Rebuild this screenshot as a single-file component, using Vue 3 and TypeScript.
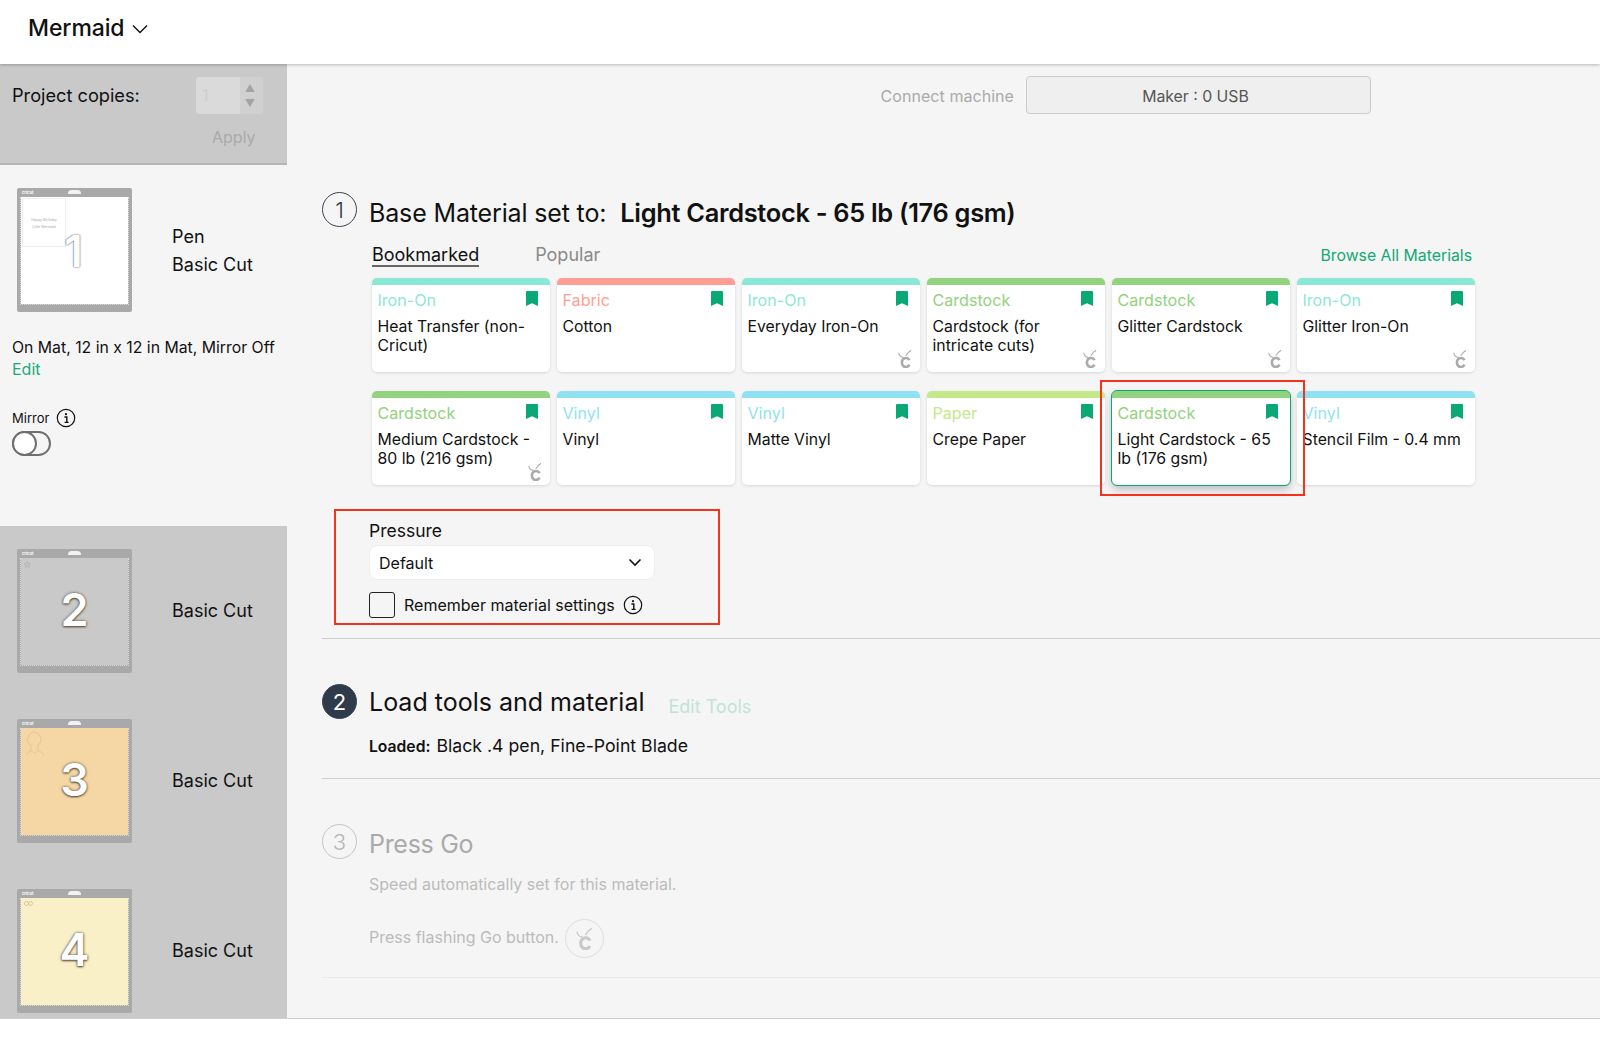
<script setup lang="ts">
interface Material { cat: string; name: string; color: string; go: boolean; selected?: boolean }
const IRON = '#8ce8d6', FABRIC = '#ff9e94', CARD = '#93d27e', VINYL = '#8fe2f4', PAPER = '#c4e88a'
const materials: Material[] = [
  { cat: 'Iron-On', name: 'Heat Transfer (non-Cricut)', color: IRON, go: false },
  { cat: 'Fabric', name: 'Cotton', color: FABRIC, go: false },
  { cat: 'Iron-On', name: 'Everyday Iron-On', color: IRON, go: true },
  { cat: 'Cardstock', name: 'Cardstock (for intricate cuts)', color: CARD, go: true },
  { cat: 'Cardstock', name: 'Glitter Cardstock', color: CARD, go: true },
  { cat: 'Iron-On', name: 'Glitter Iron-On', color: IRON, go: true },
  { cat: 'Cardstock', name: 'Medium Cardstock - 80 lb (216 gsm)', color: CARD, go: true },
  { cat: 'Vinyl', name: 'Vinyl', color: VINYL, go: false },
  { cat: 'Vinyl', name: 'Matte Vinyl', color: VINYL, go: false },
  { cat: 'Paper', name: 'Crepe Paper', color: PAPER, go: false },
  { cat: 'Cardstock', name: 'Light Cardstock - 65 lb (176 gsm)', color: CARD, go: false, selected: true },
  { cat: 'Vinyl', name: 'Stencil Film - 0.4 mm', color: VINYL, go: false },
]
const otherMats = [
  { n: 2, tone: 'gray', mark: 'star' },
  { n: 3, tone: 'orange', mark: 'mermaid' },
  { n: 4, tone: 'cream', mark: 'glasses' },
]
</script>

<template>
  <div class="page">
    <header class="top">
      <span class="project">Mermaid</span>
      <svg class="top-chev" width="16" height="10" viewBox="0 0 16 10" fill="none" stroke="#111" stroke-width="1.4"><path d="M1 1.5 8 8.5 15 1.5" /></svg>
    </header>
    <div class="body">
      <aside class="side">
        <section class="copies">
          <div class="copies-row">
            <span class="copies-label">Project copies:</span>
            <div class="stepper">
              <span class="stepper-val">1</span>
              <span class="stepper-arrows">
                <svg width="10" height="8" viewBox="0 0 12 10"><path d="M6 0 12 10H0Z" fill="#a3a3a3" /></svg>
                <svg width="10" height="8" viewBox="0 0 12 10"><path d="M6 10 12 0H0Z" fill="#a3a3a3" /></svg>
              </span>
            </div>
          </div>
          <div class="apply">Apply</div>
        </section>
        <section class="mat-active">
          <div class="mat-row">
            <div class="mat">
              <span class="mat-brand">cricut</span><span class="mat-notch"></span>
              <div class="mat-sheet white">
                <div class="mat-piece"><span>Happy Birthday</span><span>Little Mermaid</span></div>
                <span class="mat-num first">1</span>
              </div>
            </div>
            <div class="mat-text"><div>Pen</div><div>Basic Cut</div></div>
          </div>
          <p class="mat-info">On Mat, 12 in x 12 in Mat, Mirror Off</p>
          <a class="mat-edit">Edit</a>
          <div class="mirror">
            <span>Mirror</span>
            <svg width="20" height="20" viewBox="0 0 20 20"><circle cx="10" cy="10" r="8.7" fill="none" stroke="#111" stroke-width="1.2" /><circle cx="10" cy="6.2" r="1.1" fill="#111" /><path d="M8.4 9h2.4v5M8.6 14.4h4" fill="none" stroke="#111" stroke-width="1.4" /></svg>
          </div>
          <div class="toggle"><span class="knob"></span></div>
        </section>
        <section class="mat-rest">
          <div v-for="m in otherMats" :key="m.n" class="mat-row">
            <div class="mat">
              <span class="mat-brand">cricut</span><span class="mat-notch"></span>
              <div class="mat-sheet" :class="m.tone">
                <svg v-if="m.mark === 'star'" class="mark" width="7" height="7" viewBox="0 0 10 10"><path d="M5 .8 6.2 3.7 9.4 4 7 6 7.8 9.2 5 7.5 2.2 9.2 3 6 .6 4 3.8 3.7Z" fill="none" stroke="#a8a8a8" stroke-width=".8" /></svg>
                <svg v-if="m.mark === 'mermaid'" class="mark mark-mermaid" width="22" height="28" viewBox="0 0 22 28" fill="none" stroke="#e0bc8a" stroke-width=".7"><path d="M7 16C2 14 3 9 5 8 4 3 13 1 15 6 18 8 18 13 14 16L14 21M7 16V21L2 26M14 21 21 26M7 21C9 25 12 25 14 21" /></svg>
                <svg v-if="m.mark === 'glasses'" class="mark" width="9" height="5" viewBox="0 0 18 10" fill="none" stroke="#bdb28a" stroke-width="1.2"><circle cx="5" cy="5" r="4" /><circle cx="13" cy="5" r="4" /></svg>
                <span class="mat-num">{{ m.n }}</span>
              </div>
            </div>
            <div class="mat-text"><div>Basic Cut</div></div>
          </div>
        </section>
      </aside>
      <main class="main">
        <div class="connect">
          <span class="connect-label">Connect machine</span>
          <button class="connect-btn" type="button">Maker : 0 USB</button>
        </div>

        <section class="step one">
          <div class="step-head">
            <span class="step-num">1</span>
            <h2 class="step-title tight">Base Material set to:</h2>
            <strong class="step-strong">Light Cardstock - 65 lb (176 gsm)</strong>
          </div>
          <div class="tabs">
            <span class="tab active">Bookmarked</span>
            <span class="tab">Popular</span>
            <a class="browse">Browse All Materials</a>
          </div>
          <div class="grid">
            <div v-for="m in materials" :key="m.name" class="card" :class="{ selected: m.selected }" :style="{ borderTopColor: m.color }">
              <div class="card-cat" :style="{ color: m.color }">{{ m.cat }}</div>
              <div class="card-name">{{ m.name }}</div>
              <svg class="card-mark" width="12" height="15" viewBox="0 0 12 15"><path d="M0 1.2C0 .5.5 0 1.2 0h9.6c.7 0 1.2.5 1.2 1.2V15L6 12.2 0 15Z" fill="#0aa874" /></svg>
              <svg v-if="m.go" class="card-go" width="14" height="18" viewBox="0 0 17 22" fill="none" stroke="#ababab"><path d="M14 12.500A5 5.500 0 1 0 14 18" stroke-width="3.200" /><path d="M1 3.500C1 6 3 9 6.500 9M16 .5C13 1.500 11.500 4 9.500 7" stroke-width="1.300" /></svg>
              <span v-if="m.selected" class="note-sel"></span>
            </div>
          </div>
          <div class="pressure">
            <label class="pressure-label">Pressure</label>
            <div class="select">
              <span>Default</span>
              <svg width="14" height="9" viewBox="0 0 14 9" fill="none" stroke="#111" stroke-width="1.6"><path d="M1.500 1.500 7 7l5.500-5.500" /></svg>
            </div>
            <div class="remember">
              <span class="check"></span>
              <span>Remember material settings</span>
              <svg width="20" height="20" viewBox="0 0 20 20"><circle cx="10" cy="10" r="8.7" fill="none" stroke="#111" stroke-width="1.2" /><circle cx="10" cy="6.2" r="1.1" fill="#111" /><path d="M8.400 9h2.400v5M8.600 14.400h4" fill="none" stroke="#111" stroke-width="1.400" /></svg>
            </div>
            <span class="note-box"></span>
          </div>
        </section>

        <section class="step two">
          <div class="step-head">
            <span class="step-num filled">2</span>
            <h2 class="step-title load">Load tools and material</h2>
            <a class="edit-tools">Edit Tools</a>
          </div>
          <p class="loaded"><b>Loaded:</b> Black .4 pen, Fine-Point Blade</p>
        </section>

        <section class="step three">
          <div class="step-head">
            <span class="step-num muted">3</span>
            <h2 class="step-title muted-title">Press Go</h2>
          </div>
          <p class="speed">Speed automatically set for this material.</p>
          <div class="flash">
            <span>Press flashing Go button.</span>
            <span class="go-btn">
              <svg width="17" height="22" viewBox="0 0 17 22" fill="none" stroke="#c9c9c9"><path d="M14 12.500A5 5.500 0 1 0 14 18" stroke-width="3.200" /><path d="M1 3.500C1 6 3 9 6.500 9M16 .5C13 1.500 11.500 4 9.500 7" stroke-width="1.300" /></svg>
            </span>
          </div>
        </section>
      </main>
    </div>
    <footer class="foot"></footer>
  </div>
</template>

<style>
html, body { margin: 0; background: #fff; }
</style>

<style scoped>
* { box-sizing: border-box; }
.page { width: 1600px; height: 1038px; display: flex; flex-direction: column; overflow: hidden; background: #fff; color: #111; font-family: Inter, "Noto Sans", sans-serif; }
.top { height: 64px; flex: none; display: flex; align-items: center; gap: 7px; padding-left: 28px; background: #fff; box-shadow: 0 1px 3px rgba(0,0,0,.25); position: relative; z-index: 2; }
.project { font-size: 23px; font-weight: 500; letter-spacing: -.1px; margin-top: -9px; }
.top-chev { margin-top: -6px; }
.body { flex: 1; display: flex; min-height: 0; }
.side { width: 287px; flex: none; display: flex; flex-direction: column; overflow: hidden; background: #f5f5f5; }
.copies { height: 101px; flex: none; background: #c9c9c9; border-bottom: 2px solid #b6b6b6; padding: 13px 24px 0 12px; }
.copies-row { display: flex; justify-content: space-between; align-items: center; }
.copies-label { font-size: 18.200px; margin-top: -1px; }
.stepper { width: 67px; height: 37px; display: flex; border-radius: 4px; overflow: hidden; background: #d9d9d9; }
.stepper-val { flex: 1; padding: 8px 0 0 6px; font-size: 16px; color: #cfcfcf; background: #dadada; }
.stepper-arrows { width: 23px; display: flex; flex-direction: column; align-items: center; justify-content: center; gap: 7px; padding-right: 3px; background: #d0d0d0; }
.apply { margin-top: 13px; padding-left: 200px; font-size: 16px; color: #a9a9a9; }
.mat-active { height: 361px; flex: none; padding-bottom: 0; }
.mat-row { height: 170px; flex: none; padding: 23px 0 0 17px; display: flex; align-items: flex-start; }
.mat-active .mat-row { height: 173px; }
.mat { width: 115px; height: 124px; flex: none; position: relative; background: #a9a9a9; border-radius: 2px; padding: 9px 3px 7px 3px; }
.mat-brand { position: absolute; left: 5px; top: 2px; font-size: 4px; line-height: 5px; color: #fff; font-weight: 700; }
.mat-notch { position: absolute; left: 51px; top: 2px; width: 13px; height: 4px; background: #f2f2f2; border-radius: 7px 7px 1px 1px; }
.mat-sheet { height: 108px; display: flex; align-items: center; justify-content: center; position: relative; background-clip: padding-box; border-left: 1px dotted rgba(255,255,255,.6); border-bottom: 1px dotted rgba(255,255,255,.6); border-right: 1px dotted rgba(255,255,255,.6); }
.white { background-color: #fff; }
.gray { background-color: #c9c9c9; }
.orange { background-color: #f5d7a6; }
.cream { background-color: #f9f0c8; }
.mat-piece { position: absolute; left: 1px; top: 1px; width: 44px; height: 49px; border: 1px solid #eee; display: flex; flex-direction: column; align-items: center; padding-top: 19px; gap: 2px; font-size: 3.500px; line-height: 5px; color: #aaa; background: #fff; white-space: nowrap; }
.mark { position: absolute; left: 3px; top: 3px; }
.mark-mermaid { left: 3px; top: 1px; }
.mat-num { font-size: 45px; line-height: 1; font-weight: 600; color: #fff; text-shadow: 0 0 3px #5a4c38, 0 1px 2px #5a4c38; position: relative; top: -2px; }
.mat-num.first { font-size: 44px; top: 0; left: -1px; text-shadow: 0 0 2px #666, 0 0 1px #666; }
.mat-text { margin-left: 40px; font-size: 18px; line-height: 27.500px; align-self: center; color: #111; margin-top: -25px; position: relative; top: 0; }
.mat-info { margin: 0 0 0 12px; font-size: 15.800px; line-height: 20px; }
.mat-edit { display: block; margin: 2px 0 0 12px; font-size: 16px; line-height: 19px; color: #1aab7b; }
.mirror { margin: 29px 0 0 12px; display: flex; align-items: center; gap: 7px; font-size: 13px; height: 20px; }
.toggle { margin: 3px 0 0 12px; width: 39px; height: 25px; border: 2px solid #6f6f6f; border-radius: 13px; background: #f5f5f5; position: relative; }
.knob { position: absolute; left: -2px; top: -2px; width: 25px; height: 25px; border-radius: 50%; border: 2px solid #6f6f6f; background: #fff; }
.mat-rest { flex: 1; background: #c9c9c9; min-height: 0; overflow: hidden; }
.mat-rest .mat-text { margin-top: 0; top: -12px; }
.main { flex: 1; min-width: 0; background: #f5f5f5; padding-left: 35px; display: flex; flex-direction: column; }
.connect { height: 128px; flex: none; display: flex; align-items: flex-start; padding: 12px 229px 0 0; justify-content: flex-end; gap: 12px; }
.connect-label { font-size: 16px; color: #aaa; line-height: 40px; letter-spacing: .05px; }
.connect-btn { width: 345px; height: 38px; border: 1px solid #ccc; border-radius: 4px; background: #efefef; font: inherit; font-size: 15.800px; color: #555; padding: 2px 6px 0 0; }
.step { border-bottom: 1px solid #cfcfcf; position: relative; }
.step-head { display: flex; align-items: center; height: 35px; }
.step-num { width: 35px; height: 35px; flex: none; border-radius: 50%; border: 1px solid #3a4250; display: flex; align-items: center; justify-content: center; font-size: 22px; font-weight: 300; color: #2f3a4a; margin-right: 12px; }
.step-num.filled { background: #2f3a4a; color: #fff; font-weight: 400; }
.step-num.muted { border-color: #c4c4c4; color: #b4b4b4; }
.step-title { margin: 0; font-size: 25px; font-weight: 400; line-height: 35px; white-space: nowrap; position: relative; top: 3px; }
.step-title.tight { letter-spacing: -.15px; top: 4px; }
.step-title.load { top: 1px; }
.muted-title { color: #aaa; letter-spacing: -.3px; }
.step-strong { font-size: 25.400px; font-weight: 600; margin-left: 14px; white-space: nowrap; position: relative; top: 3px; letter-spacing: -.3px; }
.one { height: 447px; }
.tabs { display: flex; align-items: baseline; margin: 15px 128px 0 50px; font-size: 18px; height: 36px; padding-top: 2px; }
.tab { color: #8a8a8a; margin-right: 56px; }
.tab.active { color: #111; border-bottom: 2px solid #666; }
.browse { margin-left: auto; font-size: 15.800px; color: #12a877; }
.grid { display: grid; grid-template-columns: repeat(6, 178px); grid-auto-rows: 94px; gap: 19px 7px; margin-left: 50px; }
.card { background: #fff; border-radius: 5px; border-top: 7px solid; padding: 5px 6px 0 5.500px; position: relative; box-shadow: 0 1px 3px rgba(0,0,0,.12); }
.card-cat { font-size: 16.100px; line-height: 20px; }
.card-name { margin-top: 6.500px; font-size: 15.800px; line-height: 19px; color: #111; }
.card-mark { position: absolute; right: 12.500px; top: 6px; }
.card-go { position: absolute; right: 8px; bottom: 4px; }
.card.selected { outline: 1px solid #0aa874; box-shadow: 0 4px 8px rgba(0,0,0,.25); }
.note-sel { position: absolute; left: -12px; top: -18px; width: 205px; height: 116px; border: 2px solid #f5321c; pointer-events: none; z-index: 3; }
.pressure { position: relative; margin-top: 34px; padding-left: 47px; width: 398px; }
.pressure-label { display: block; font-size: 17.500px; line-height: 24px; }
.select { width: 286px; height: 35px; margin-top: 2px; background: #fff; border: 1px solid #eee; border-radius: 8px; display: flex; align-items: center; justify-content: space-between; padding: 0 12px 0 9px; font-size: 16px; }
.remember { display: flex; align-items: center; margin-top: 12px; font-size: 16px; }
.check { width: 26px; height: 26px; border: 1px solid #222; border-radius: 3px; margin-right: 9px; }
.remember svg { margin-left: 8px; }
.note-box { position: absolute; left: 12px; top: -10px; width: 386px; height: 116px; border: 2px solid #f5321c; pointer-events: none; }
.two { height: 140px; padding-top: 45px; }
.edit-tools { margin-left: 24px; font-size: 18px; color: #bfe4d6; position: relative; top: 5px; }
.loaded { margin: 15px 0 0 47px; font-size: 17.700px; line-height: 24px; }
.loaded b { font-size: 15.700px; font-weight: 600; margin-right: 1px; }
.three { height: 199px; padding-top: 45px; border-bottom-color: #e9e9e9; }
.speed { margin: 15px 0 0 47px; font-size: 16px; line-height: 20px; color: #bbb; }
.flash { display: flex; align-items: center; gap: 6px; margin: 22px 0 0 47px; font-size: 16px; color: #bbb; }
.go-btn { width: 39px; height: 39px; border: 1px solid #ddd; border-radius: 50%; display: flex; align-items: center; justify-content: center; margin-top: 3px; }
.foot { height: 20px; flex: none; border-top: 1px solid #cfcfcf; background: #fff; position: relative; z-index: 2; }
</style>
